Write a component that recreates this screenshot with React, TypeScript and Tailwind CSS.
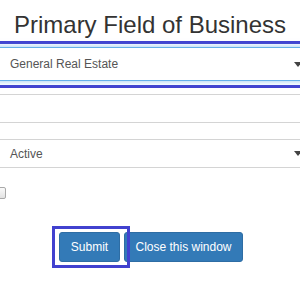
function Caret() {
  return (
    <svg width="8" height="5" viewBox="0 0 8 5" className="shrink-0">
      <path d="M0 0h8L4 5z" fill="#444" />
    </svg>
  );
}

export default function App() {
  return (
    <div className="h-[300px] w-[300px] overflow-hidden bg-white font-['Liberation_Sans',Arial,sans-serif]">
      <div className="-mx-2">
        <h2 className="pt-[12px] text-center text-[24px] leading-[26px] text-[#333]">
          Primary Field of Business
        </h2>

        <div className="mt-[3px] border-y-[3px] border-[#4141cf] pt-[3px] pb-[4px]">
          <div className="flex h-[34px] items-center justify-between border border-[#66afe9] bg-white pl-[17px] pr-[5px] text-[12px] text-[#555] shadow-[0_0_6px_rgba(102,175,233,0.7)]">
            <span>General Real Estate</span>
            <Caret />
          </div>
        </div>

        <div className="mt-[6px] h-[29px] border border-[#d4d4d4] bg-white" />

        <div className="mt-[16px] flex h-[29px] items-center justify-between border border-[#d4d4d4] bg-white pl-[17px] pr-[5px] text-[12px] text-[#555]">
          <span>Active</span>
          <Caret />
        </div>

        <div className="mt-[19px] ml-[2px] h-[12px] w-[12px] rounded-[2px] border border-[#a9a9a9] bg-gradient-to-b from-[#fafafa] to-[#e2e2e2]" />

        <div className="relative mt-[33px] flex justify-center gap-[4px] pl-[2px]">
          <button className="h-[30px] w-[61px] rounded-[3px] border border-[#2e6da4] bg-[#337ab7] text-[12px] text-white">
            Submit
          </button>
          <button className="h-[30px] w-[119px] rounded-[3px] border border-[#2e6da4] bg-[#337ab7] text-[12px] text-white">
            Close this window
          </button>
          <div className="absolute left-[60px] top-[-6px] h-[42px] w-[78px] border-[3px] border-[#4141cf]" />
        </div>
      </div>
    </div>
  );
}
